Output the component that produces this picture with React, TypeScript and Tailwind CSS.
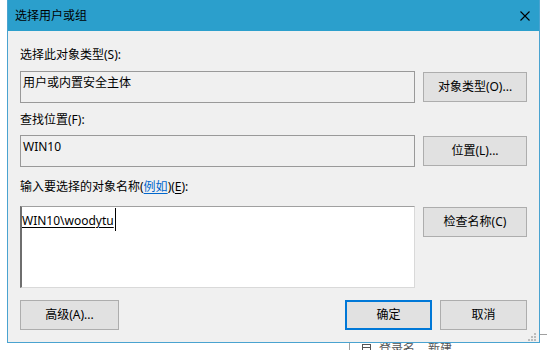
import React from "react";

function Btn({ children, w, primary }: { children: React.ReactNode; w: string; primary?: boolean }) {
  return (
    <div
      className={
        "h-[30px] shrink-0 flex items-center justify-center bg-[#e1e1e1] " +
        w +
        (primary ? " border-2 border-[#0078d7]" : " border border-[#adadad]")
      }
    >
      {children}
    </div>
  );
}

export default function App() {
  return (
    <div className="relative w-[547px] h-[350px] overflow-hidden bg-white font-['Noto_Sans','Noto_Sans_CJK_SC',sans-serif] text-[12px] leading-[16px] text-black">
      {/* background application behind the dialog */}
      <div className="absolute left-[349px] top-[343px] h-[10px] w-px bg-[#a0a0a0]" />
      <svg className="absolute left-[362px] top-[344px]" width="9" height="9" viewBox="0 0 9 9">
        <rect x="0.5" y="0.5" width="8" height="8" fill="none" stroke="#555" />
        <line x1="0" y1="3.5" x2="9" y2="3.5" stroke="#555" />
      </svg>
      <div className="absolute left-[379px] top-[341px] text-[#555]">登录名</div>
      <div className="absolute left-[428px] top-[341px] text-[#555]">新建</div>
      <div className="absolute left-[540px] top-[334px] h-px w-[7px] bg-[#a0a0a0]" />

      {/* dialog window */}
      <div className="absolute left-[7px] top-0 w-[533px] h-[343px] border-x border-b border-[#4aa3d0] bg-[#f0f0f0] flex flex-col">
        <div className="h-[31px] shrink-0 bg-[#2b9fcc] flex items-center justify-between pl-[7px] pr-[9px]">
          <span>选择用户或组</span>
          <svg width="10" height="10" viewBox="0 0 10 10">
            <path d="M0.5 0.5 L9.5 9.5 M9.5 0.5 L0.5 9.5" stroke="#000" strokeWidth="1.1" />
          </svg>
        </div>

        <div className="flex flex-col px-[12px] pt-[16px] pb-[12px]">
          <div className="h-[16px]">选择此对象类型(S):</div>
          <div className="mt-[8px] flex items-center gap-[8px]">
            <div className="h-[32px] w-[395px] border border-[#999999] pl-[2px] pt-[3px]">用户或内置安全主体</div>
            <Btn w="w-[104px]">对象类型(O)...</Btn>
          </div>

          <div className="mt-[9px] h-[16px]">查找位置(F):</div>
          <div className="mt-[7px] flex items-center gap-[8px]">
            <div className="h-[32px] w-[395px] border border-[#999999] pl-[2px] pt-[3px]">WIN10</div>
            <Btn w="w-[104px]">位置(L)...</Btn>
          </div>

          <div className="mt-[12px] h-[16px]">
            输入要选择的对象名称(<span className="text-[#0066cc] underline underline-offset-2">例如</span>)(
            <span className="underline underline-offset-2">E</span>):
          </div>
          <div className="mt-[11px] flex items-start gap-[8px]">
            <div className="h-[82px] w-[395px] bg-white border-t border-t-[#a0a0a0] border-l-2 border-l-[#6e6e6e] border-r border-r-[#d9d9d9] border-b border-b-[#d9d9d9] pt-[6px]">
              <div className="flex items-start">
                <span className="underline underline-offset-2">{"WIN10\\woodytu"}</span>
                <span className="-mt-[5px] ml-px h-[23px] w-px bg-black" />
              </div>
            </div>
            <div className="mt-px">
              <Btn w="w-[104px]">检查名称(C)</Btn>
            </div>
          </div>

          <div className="mt-[12px] flex items-center">
            <Btn w="w-[99px]">高级(A)...</Btn>
            <div className="flex-1" />
            <Btn w="w-[87px]" primary>
              确定
            </Btn>
            <div className="w-[8px]" />
            <Btn w="w-[87px]">取消</Btn>
          </div>
        </div>

        <svg className="absolute left-[520px] top-[333px]" width="8" height="8" viewBox="0 0 8 8">
          <rect x="6" y="0" width="2" height="2" fill="#bcbcbc" />
          <rect x="3" y="3" width="2" height="2" fill="#bcbcbc" />
          <rect x="6" y="3" width="2" height="2" fill="#bcbcbc" />
          <rect x="0" y="6" width="2" height="2" fill="#bcbcbc" />
          <rect x="3" y="6" width="2" height="2" fill="#bcbcbc" />
          <rect x="6" y="6" width="2" height="2" fill="#bcbcbc" />
        </svg>
      </div>
    </div>
  );
}
